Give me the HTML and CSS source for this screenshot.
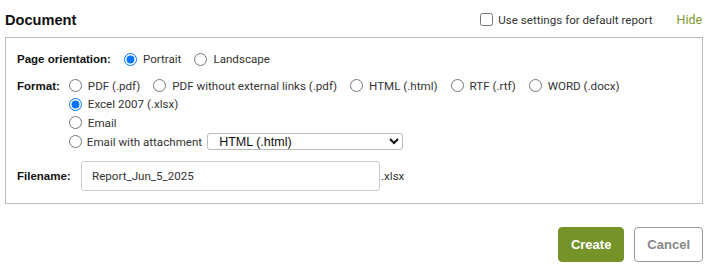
FILE: index.html
```html
<!DOCTYPE html>
<html lang="en">
<head>
    <meta charset="UTF-8">
    <meta name="viewport" content="width=device-width, initial-scale=1.0">
    <title>Document</title>
    <link rel="stylesheet" href="styles.css">
</head>
<body>
    <div class="header">
        <h1>Document</h1>
        <div class="header-tools">
            <label class="check"><input type="checkbox"> Use settings for default report</label>
            <a href="#" class="hide">Hide</a>
        </div>
    </div>
    <div class="panel">
        <div class="row orient">
            <span class="label">Page orientation:</span>
            <div class="options">
                <label><input type="radio" name="orient" checked> Portrait</label>
                <label><input type="radio" name="orient"> Landscape</label>
            </div>
        </div>
        <div class="row format">
            <span class="label">Format:</span>
            <div class="format-list">
                <div class="options">
                    <label><input type="radio" name="fmt"> PDF (.pdf)</label>
                    <label><input type="radio" name="fmt"> PDF without external links (.pdf)</label>
                    <label><input type="radio" name="fmt"> HTML (.html)</label>
                    <label><input type="radio" name="fmt"> RTF (.rtf)</label>
                    <label><input type="radio" name="fmt"> WORD (.docx)</label>
                </div>
                <label><input type="radio" name="fmt" checked> Excel 2007 (.xlsx)</label>
                <label><input type="radio" name="fmt"> Email</label>
                <label class="attach-row"><input type="radio" name="fmt"> Email with attachment
                    <select class="attach">
                        <option>HTML (.html)</option>
                        <option>PDF (.pdf)</option>
                    </select>
                </label>
            </div>
        </div>
        <div class="row filename">
            <span class="label">Filename:</span>
            <input type="text" value="Report_Jun_5_2025">
            <span class="ext">.xlsx</span>
        </div>
    </div>
    <div class="actions">
        <button class="create">Create</button>
        <button class="cancel">Cancel</button>
    </div>
</body>
</html>
```

FILE: styles.css
```css
* {
    box-sizing: border-box;
}
body {
    margin: 0;
    padding: 0 2px 0 5px;
    font-family: Roboto, sans-serif;
    font-size: 11.6px;
    color: #333;
}
.header {
    display: flex;
    align-items: center;
    justify-content: space-between;
    height: 37px;
    padding-top: 2px;
}
h1 {
    margin: 0;
    font-family: "Liberation Sans", Arial, sans-serif;
    font-size: 14.6px;
    font-weight: bold;
    color: #111;
}
.header-tools {
    display: flex;
    align-items: center;
    gap: 24px;
    padding-right: 1px;
}
.check {
    display: flex;
    align-items: center;
    gap: 5px;
}
.check input {
    width: 13px;
    height: 13px;
    margin: 0;
}
.hide {
    color: #7a9a2a;
    text-decoration: none;
    font-size: 12.4px;
}
.panel {
    border: 1px solid #bbb;
    padding: 12px 11px 12px;
}
.row {
    display: flex;
    align-items: flex-start;
    gap: 13px;
}
.label {
    font-family: "Liberation Sans", Arial, sans-serif;
    font-size: 11.5px;
    font-weight: bold;
    color: #111;
    line-height: 18px;
}
.options {
    display: flex;
    gap: 13px;
}
.row label {
    display: flex;
    align-items: center;
    gap: 6px;
    height: 18.5px;
}
.row input[type=radio] {
    width: 13px;
    height: 13px;
    margin: 0;
}
.format {
    margin-top: 8px;
    gap: 9px;
}
.format-list {
    display: flex;
    flex-direction: column;
}
.row .attach-row {
    height: 19px;
    gap: 5px;
}
.attach {
    width: 196px;
    height: 17px;
    font-family: "Liberation Sans", Arial, sans-serif;
    font-size: 12.5px;
    color: #111;
    border: 1px solid #bbb;
    border-radius: 3px;
    background: #fff;
    padding: 0 4px 0 7px;
}
.filename {
    margin-top: 10px;
    align-items: center;
    gap: 0;
}
.filename .label {
    width: 64px;
}
.filename input {
    width: 299px;
    height: 30px;
    border: 1px solid #ccc;
    border-radius: 3px;
    padding: 0 10px;
    font-family: Roboto, sans-serif;
    font-size: 11.6px;
    color: #333;
}
.ext {
    margin-left: 1px;
}
.actions {
    display: flex;
    justify-content: flex-end;
    gap: 10px;
    margin-top: 23px;
}
.actions button {
    height: 35px;
    border-radius: 4px;
    font-family: "Liberation Sans", Arial, sans-serif;
    font-size: 13px;
    font-weight: bold;
    padding: 0 12px;
}
.create {
    background: #76932a;
    border: 1px solid #76932a;
    color: #fff;
}
.cancel {
    background: #fff;
    border: 1px solid #999;
    color: #888;
}
```
